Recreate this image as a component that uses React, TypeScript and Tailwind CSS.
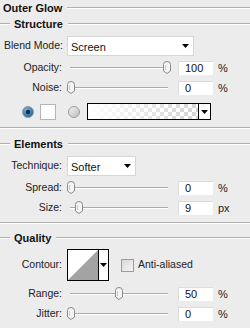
import React from 'react';

// Photoshop "Outer Glow" layer style panel

const font = { fontFamily: '"Liberation Sans", Arial, sans-serif' };

const Triangle: React.FC = () => (
  <svg width="7" height="4" viewBox="0 0 7 4">
    <path d="M0 0 H7 L3.5 4 Z" fill="#000" />
  </svg>
);

const Thumb: React.FC = () => (
  <svg width="8" height="13" viewBox="0 0 8 13">
    <path
      d="M0.5 3.5 Q0.5 0.5 4 0.5 Q7.5 0.5 7.5 3.5 V10 L4 12.5 L0.5 10 Z"
      fill="#f4f4f4"
      stroke="#8a8a8a"
    />
    <path d="M2.5 4 V9" stroke="#c8c8c8" />
  </svg>
);

const Radio: React.FC<{ on?: boolean }> = ({ on }) => (
  <svg width="12" height="12" viewBox="0 0 12 12">
    <defs>
      <radialGradient id="rb" cx="0.4" cy="0.35" r="0.7">
        <stop offset="0" stopColor="#7fb4dc" />
        <stop offset="1" stopColor="#1d5f95" />
      </radialGradient>
      <linearGradient id="rg" x1="0" y1="0" x2="1" y2="1">
        <stop offset="0" stopColor="#f2f2f2" />
        <stop offset="1" stopColor="#bdbdbd" />
      </linearGradient>
    </defs>
    <circle cx="6" cy="6" r="5.5" fill={on ? 'url(#rb)' : 'url(#rg)'} stroke="#9a9a9a" />
    {on && <circle cx="6" cy="6" r="2.2" fill="#0f2f4d" />}
  </svg>
);

const SectionHeader: React.FC<{ title: string; className: string; lead?: boolean }> = ({ title, className, lead }) => (
  <div className={`flex items-center h-[16px] ${className}`}>
    {lead ? <div className="w-[10px] h-[2px] border-t border-[#b0b0b0] border-b border-b-white" /> : <div className="w-[3px]" />}
    <span className={`font-bold text-[11px] text-[#111] whitespace-nowrap ${lead ? 'ml-[4px]' : ''}`}>{title}</span>
    <div className="flex-1 ml-[5px] h-[2px] border-t border-[#b0b0b0] border-b border-b-white" />
  </div>
);

const Separator: React.FC<{ className: string }> = ({ className }) => (
  <div className={`h-[2px] border-t border-[#b0b0b0] border-b border-b-white ${className}`} />
);

const SliderRow: React.FC<{ label: string; pos: number; value: string; unit: string; className: string }> = ({
  label,
  pos,
  value,
  unit,
  className,
}) => (
  <div className={`flex items-center h-[14px] ${className}`}>
    <div className="w-[63px] text-right text-[10.5px] text-[#222] pr-[1px] whitespace-nowrap">{label}</div>
    <div className="relative w-[106px] h-[14px] ml-[3px]">
      <div className="absolute left-[4px] right-[4px] top-[6px] h-[2px] border-t border-[#ababab] border-b border-b-white" />
      <div className="absolute top-0" style={{ left: pos }}>
        <Thumb />
      </div>
    </div>
    <div className="ml-[6px] w-[35px] h-[14px] bg-white border-t border-l border-[#dcdcdc] text-[11px] leading-[13px] pl-[6px] text-[#111]">
      {value}
    </div>
    <span className="ml-[5px] text-[11px] text-[#222]">{unit}</span>
  </div>
);

const Dropdown: React.FC<{ value: string; width: string }> = ({ value, width }) => (
  <div className={`flex items-center justify-between h-[20px] bg-white border border-[#d6d6d6] pl-[3px] pr-[4px] text-[11px] text-[#111] ${width}`}>
    <span className="mt-[3px]">{value}</span>
    <Triangle />
  </div>
);

export default function App() {
  return (
    <div className="w-[250px] h-[328px] bg-[#ececec] overflow-hidden flex flex-col" style={font}>
      <SectionHeader title="Outer Glow" className="mt-0" />
      <SectionHeader title="Structure" className="" lead />

      <div className="flex items-center h-[20px] mt-[4px]">
        <div className="w-[62px] text-[10.5px] text-[#222] pl-[4px] whitespace-nowrap">Blend Mode:</div>
        <div className="ml-[5px]">
          <Dropdown value="Screen" width="w-[127px]" />
        </div>
      </div>

      <SliderRow label="Opacity:" pos={97} value="100" unit="%" className="mt-[5px]" />
      <SliderRow label="Noise:" pos={1} value="0" unit="%" className="mt-[6px]" />

      <div className="flex items-center h-[17px] mt-[8px]">
        <div className="ml-[22px]">
          <Radio on />
        </div>
        <div className="ml-[6px] w-[16px] h-[16px] bg-white border border-[#b4b4b4]" />
        <div className="ml-[12px]">
          <Radio />
        </div>
        <div className="ml-[7px] flex w-[124px] h-[17px] border border-black bg-white">
          <svg width="110" height="15" viewBox="0 0 110 15" className="block">
            <defs>
              <pattern id="chk" width="8" height="8" patternUnits="userSpaceOnUse">
                <rect width="8" height="8" fill="#fff" />
                <rect width="4" height="4" fill="#d4d4d4" />
                <rect x="4" y="4" width="4" height="4" fill="#d4d4d4" />
              </pattern>
              <linearGradient id="fade" x1="0" y1="0" x2="1" y2="0">
                <stop offset="0" stopColor="#fff" stopOpacity="1" />
                <stop offset="1" stopColor="#fff" stopOpacity="0" />
              </linearGradient>
            </defs>
            <rect width="110" height="15" fill="url(#chk)" />
            <rect width="110" height="15" fill="url(#fade)" />
          </svg>
          <div className="flex-1 border-l border-black flex items-center justify-center">
            <Triangle />
          </div>
        </div>
      </div>

      <Separator className="mt-[7px]" />
      <SectionHeader title="Elements" className="mt-[7px]" lead />

      <div className="flex items-center h-[20px] mt-[4px]">
        <div className="w-[62px] text-right text-[10.5px] text-[#222]">Technique:</div>
        <div className="ml-[5px]">
          <Dropdown value="Softer" width="w-[69px]" />
        </div>
      </div>

      <SliderRow label="Spread:" pos={1} value="0" unit="%" className="mt-[5px]" />
      <SliderRow label="Size:" pos={9} value="9" unit="px" className="mt-[6px]" />

      <Separator className="mt-[7px]" />
      <SectionHeader title="Quality" className="mt-[6px]" lead />

      <div className="flex items-center h-[32px] mt-[3px]">
        <div className="w-[62px] text-right text-[10.5px] text-[#222]">Contour:</div>
        <div className="ml-[5px] flex w-[42px] h-[32px] border border-black bg-white">
          <svg width="30" height="30" viewBox="0 0 30 30" className="block">
            <path d="M0 30 L30 0 V30 Z" fill="#a3a3a3" />
          </svg>
          <div className="flex-1 border-l border-black flex items-center justify-center">
            <Triangle />
          </div>
        </div>
        <div className="ml-[12px] w-[13px] h-[13px] border border-[#9c9c9c] bg-gradient-to-br from-[#d8d8d8] to-[#f6f6f6]" />
        <span className="ml-[4px] text-[10.5px] text-[#222]">Anti-aliased</span>
      </div>

      <SliderRow label="Range:" pos={49} value="50" unit="%" className="mt-[6px]" />
      <SliderRow label="Jitter:" pos={1} value="0" unit="%" className="mt-[6px]" />
    </div>
  );
}
